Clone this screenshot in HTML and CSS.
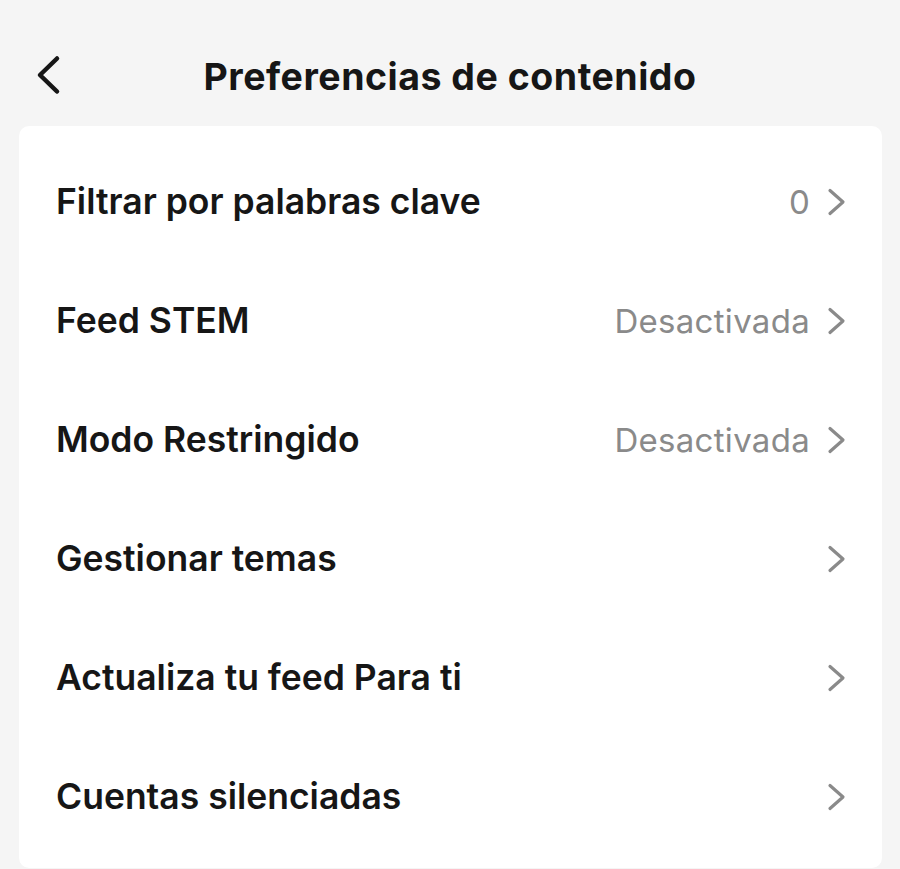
FILE: index.html
```html
<!DOCTYPE html>
<html lang="es">
<head>
<meta charset="utf-8">
<link rel="stylesheet" href="styles.css">
</head>
<body>
<div class="page">
  <header class="topbar">
    <svg class="back" viewBox="0 0 26 40" width="26" height="40"><path d="M22 3.5 L5 20 L22 36.5" fill="none" stroke="#161616" stroke-width="4.5" stroke-linecap="round" stroke-linejoin="round"/></svg>
    <h1 class="title">Preferencias de contenido</h1>
  </header>
  <main class="card">
    <div class="row"><span class="label">Filtrar por palabras clave</span><span class="value">0</span><svg class="chev" viewBox="0 0 22 30" width="22" height="30"><path d="M4 3.5 L17 15 L4 26.5" fill="none" stroke="#8a8a8a" stroke-width="3.2" stroke-linecap="round" stroke-linejoin="round"/></svg></div>
    <div class="row"><span class="label">Feed STEM</span><span class="value">Desactivada</span><svg class="chev" viewBox="0 0 22 30" width="22" height="30"><path d="M4 3.5 L17 15 L4 26.5" fill="none" stroke="#8a8a8a" stroke-width="3.2" stroke-linecap="round" stroke-linejoin="round"/></svg></div>
    <div class="row"><span class="label">Modo Restringido</span><span class="value">Desactivada</span><svg class="chev" viewBox="0 0 22 30" width="22" height="30"><path d="M4 3.5 L17 15 L4 26.5" fill="none" stroke="#8a8a8a" stroke-width="3.2" stroke-linecap="round" stroke-linejoin="round"/></svg></div>
    <div class="row"><span class="label">Gestionar temas</span><svg class="chev" viewBox="0 0 22 30" width="22" height="30"><path d="M4 3.5 L17 15 L4 26.5" fill="none" stroke="#8a8a8a" stroke-width="3.2" stroke-linecap="round" stroke-linejoin="round"/></svg></div>
    <div class="row"><span class="label">Actualiza tu feed Para ti</span><svg class="chev" viewBox="0 0 22 30" width="22" height="30"><path d="M4 3.5 L17 15 L4 26.5" fill="none" stroke="#8a8a8a" stroke-width="3.2" stroke-linecap="round" stroke-linejoin="round"/></svg></div>
    <div class="row"><span class="label">Cuentas silenciadas</span><svg class="chev" viewBox="0 0 22 30" width="22" height="30"><path d="M4 3.5 L17 15 L4 26.5" fill="none" stroke="#8a8a8a" stroke-width="3.2" stroke-linecap="round" stroke-linejoin="round"/></svg></div>
  </main>
</div>
</body>
</html>
```
FILE: styles.css
```css
html, body {
  margin: 0;
  padding: 0;
  background: #f5f5f5;
  font-family: Inter, "Noto Sans", sans-serif;
}
.page {
  width: 900px;
  height: 869px;
  overflow: hidden;
}
.topbar {
  position: relative;
  height: 100px;
  padding-top: 26px;
  display: flex;
  align-items: center;
  justify-content: center;
}
.back {
  position: absolute;
  left: 35px;
  top: 55px;
}
.title {
  margin: 0;
  font-size: 37.5px;
  font-weight: 700;
  letter-spacing: 0.5px;
  color: #161616;
}
.card {
  margin: 0 18px 0 19px;
  background: #fff;
  border-radius: 10px;
  padding: 16px 0 12px;
}
.row {
  height: 119px;
  display: flex;
  align-items: center;
  padding: 0 34px 0 37px;
}
.label {
  flex: 1;
  font-size: 35.5px;
  font-weight: 600;
  color: #161616;
}
.value {
  font-size: 33px;
  letter-spacing: 0.3px;
  color: #8a8a8a;
  margin-right: 16px;
}
.chev {
  display: block;
}
```
